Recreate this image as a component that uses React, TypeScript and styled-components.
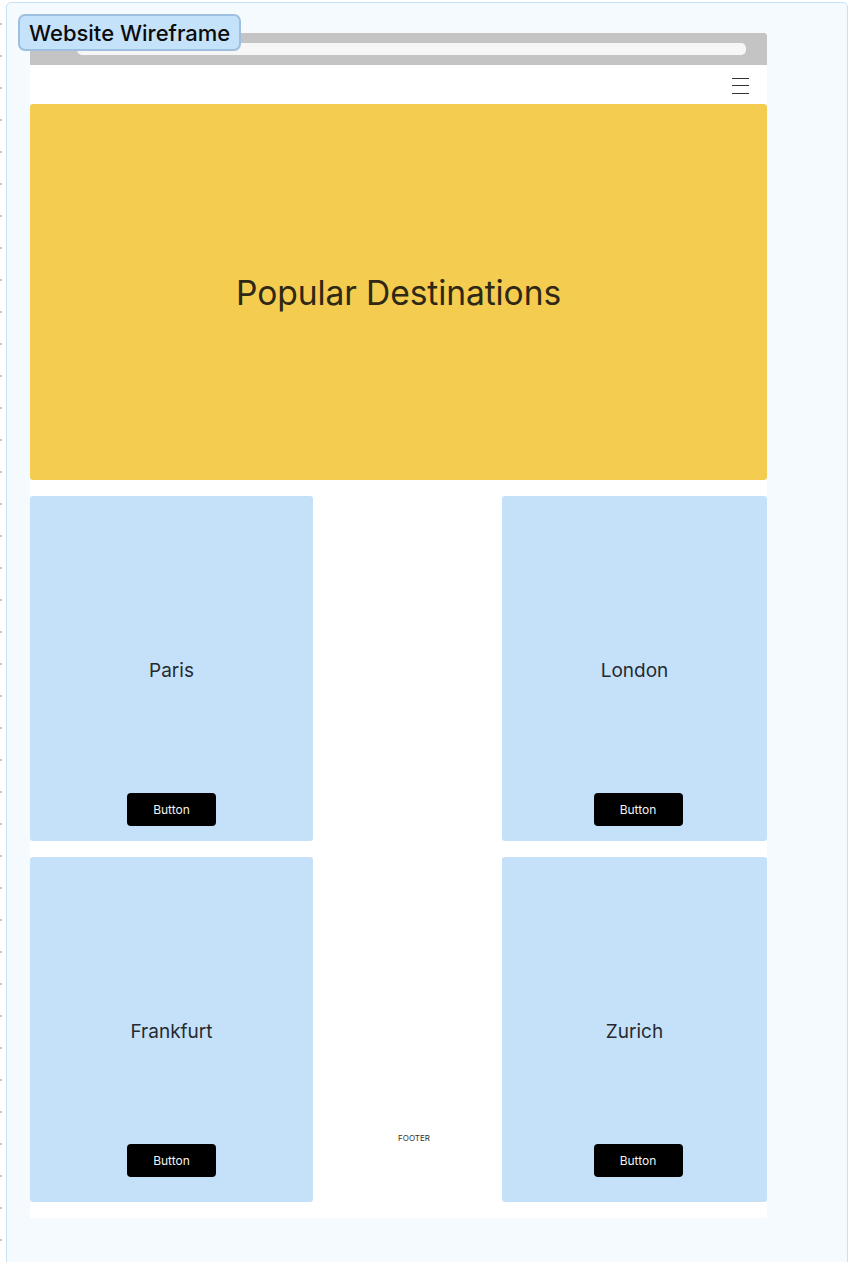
import { createGlobalStyle } from "styled-components";
import styled from "styled-components";

const GlobalStyle = createGlobalStyle`
  html, body {
    margin: 0;
    padding: 0;
    background-color: #ffffff;
    background-image: radial-gradient(circle, #c8c8c8 1px, transparent 1.2px);
    background-size: 32px 32px;
    background-position: -15px 8px;
    font-family: Inter, "Noto Sans", sans-serif;
    overflow: hidden;
  }
`;

const Frame = styled.div`
  position: relative;
  margin: 2px 0 0 6px;
  width: 842px;
  height: 1290px;
  border: 1px solid #c5e2fb;
  border-radius: 5px;
  background: #f5faff;
  padding: 30px 0 0 23px;
  box-sizing: border-box;
`;

const FrameLabel = styled.div`
  position: absolute;
  left: 11px;
  top: 11px;
  height: 37px;
  padding: 0 9px;
  display: flex;
  align-items: center;
  background: #c5e2fb;
  border: 2px solid #9ebfdf;
  border-radius: 7px;
  font-size: 22px;
  font-weight: 500;
  color: #0b0b0b;
  box-sizing: border-box;
  z-index: 2;
`;

const Browser = styled.div`
  width: 737px;
  background: #ffffff;
  display: flex;
  flex-direction: column;
  padding-bottom: 16px;
`;

const TopBar = styled.div`
  height: 32px;
  background: #c4c4c4;
  border-radius: 3px 3px 0 0;
  display: flex;
  align-items: center;
  padding: 0 21px 0 47px;
`;

const AddressBar = styled.div`
  flex: 1;
  height: 12px;
  background: #f6f6f6;
  border-radius: 5px;
`;

const Nav = styled.div`
  height: 39px;
  display: flex;
  align-items: center;
  justify-content: flex-end;
  padding-right: 18px;
`;

const Burger = styled.div`
  width: 17px;
  display: flex;
  flex-direction: column;
  gap: 6.5px;
  margin-top: 2px;

  span {
    display: block;
    height: 1px;
    background: #333333;
  }
`;

const Hero = styled.div`
  height: 376px;
  background: #f4cd50;
  border-radius: 3px;
  display: flex;
  align-items: center;
  justify-content: center;
  font-size: 33.6px;
  color: #2e2815;
  letter-spacing: -0.1px;
`;

const Grid = styled.div`
  margin-top: 16px;
  display: grid;
  grid-template-columns: 283px 189px 265px;
  grid-template-rows: 345px 345px;
  row-gap: 16px;
`;

const Card = styled.div<{ $bottom: number }>`
  background: #c5e1fa;
  border-radius: 3px;
  display: flex;
  flex-direction: column;
  align-items: center;
  padding-bottom: ${(p) => p.$bottom}px;
  box-sizing: border-box;
`;

const CardTitle = styled.div<{ $top: number }>`
  flex: 1;
  display: flex;
  align-items: center;
  font-size: 19px;
  color: #252a30;
  padding-top: ${(p) => p.$top}px;
`;

const Button = styled.div<{ $shift?: number }>`
  width: 89px;
  height: 33px;
  margin-left: ${(p) => p.$shift ?? 0}px;
  background: #000000;
  color: #f2f2f2;
  border-radius: 4px;
  font-size: 12px;
  display: flex;
  align-items: center;
  justify-content: center;
`;

const Spacer = styled.div``;

const FooterCell = styled.div`
  display: flex;
  align-items: flex-end;
  justify-content: center;
  padding: 0 0 59px 13px;
  font-size: 8px;
  color: #333333;
`;

type City = { name: string; shift?: number };

function CityCard({ city, row }: { city: City; row: number }) {
  const bottom = row === 0 ? 15 : 25;
  const top = row === 0 ? 52 : 62;
  return (
    <Card $bottom={bottom}>
      <CardTitle $top={top}>{city.name}</CardTitle>
      <Button $shift={city.shift}>Button</Button>
    </Card>
  );
}

export default function App() {
  return (
    <>
      <GlobalStyle />
      <Frame>
        <FrameLabel>Website Wireframe</FrameLabel>
        <Browser>
          <TopBar>
            <AddressBar />
          </TopBar>
          <Nav>
            <Burger>
              <span />
              <span />
              <span />
            </Burger>
          </Nav>
          <Hero>Popular Destinations</Hero>
          <Grid>
            <CityCard city={{ name: "Paris" }} row={0} />
            <Spacer />
            <CityCard city={{ name: "London", shift: 7 }} row={0} />
            <CityCard city={{ name: "Frankfurt" }} row={1} />
            <FooterCell>FOOTER</FooterCell>
            <CityCard city={{ name: "Zurich", shift: 7 }} row={1} />
          </Grid>
        </Browser>
      </Frame>
    </>
  );
}
